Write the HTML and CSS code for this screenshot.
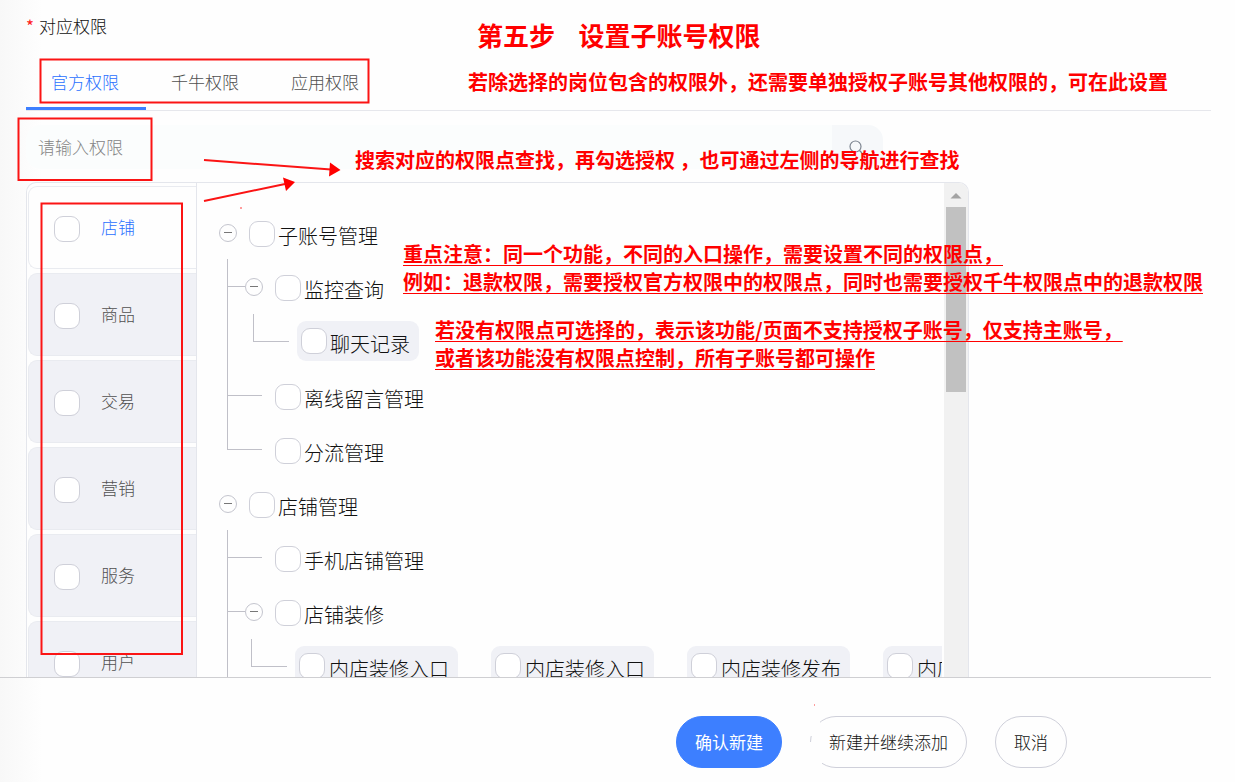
FILE: index.html
```
<!DOCTYPE html>
<html lang="zh-CN">
<head>
<meta charset="utf-8">
<meta name="viewport" content="width=device-width, initial-scale=1">
<title>设置子账号权限</title>
<link rel="stylesheet" href="styles.css">
</head>
<body>
<div class="page">
  <main class="form">
    <h2 class="field-label"><span class="required">*</span>对应权限</h2>
    <div class="tabs" role="tablist">
      <button class="tab tab-active" type="button" role="tab" aria-selected="true">官方权限</button>
      <button class="tab" type="button" role="tab" aria-selected="false">千牛权限</button>
      <button class="tab" type="button" role="tab" aria-selected="false">应用权限</button>
    </div>
    <form class="search">
      <input class="search-input" type="text" placeholder="请输入权限" aria-label="请输入权限">
      <button class="search-button" type="button" aria-label="搜索">
        <svg width="14" height="14" viewBox="0 0 14 14" fill="none" stroke="#7d8590" stroke-width="1.200"><circle cx="6.500" cy="6.500" r="5.500"/><path d="M10.500 10.500L13 13"/></svg>
      </button>
    </form>
    <section class="panel">
      <nav class="categories">
        <label class="category category-active"><input class="check" type="checkbox"><span class="category-name">店铺</span></label>
        <label class="category"><input class="check" type="checkbox"><span class="category-name">商品</span></label>
        <label class="category"><input class="check" type="checkbox"><span class="category-name">交易</span></label>
        <label class="category"><input class="check" type="checkbox"><span class="category-name">营销</span></label>
        <label class="category"><input class="check" type="checkbox"><span class="category-name">服务</span></label>
        <label class="category"><input class="check" type="checkbox"><span class="category-name">用户</span></label>
      </nav>
      <ul class="tree">
        <li>
          <div class="row"><button class="toggle" type="button" aria-label="收起"></button><label class="node"><input class="check" type="checkbox"><span class="node-name">子账号管理</span></label></div>
          <ul class="children">
            <li class="branch">
              <div class="row"><button class="toggle" type="button" aria-label="收起"></button><label class="node"><input class="check" type="checkbox"><span class="node-name">监控查询</span></label></div>
              <div class="leaves">
                <label class="node chip"><input class="check" type="checkbox"><span class="node-name">聊天记录</span></label>
              </div>
            </li>
            <li class="branch branch-end"><div class="row"><label class="node"><input class="check" type="checkbox"><span class="node-name">离线留言管理</span></label></div></li>
            <li class="branch branch-end"><div class="row"><label class="node"><input class="check" type="checkbox"><span class="node-name">分流管理</span></label></div></li>
          </ul>
        </li>
        <li>
          <div class="row"><button class="toggle" type="button" aria-label="收起"></button><label class="node"><input class="check" type="checkbox"><span class="node-name">店铺管理</span></label></div>
          <ul class="children">
            <li class="branch branch-end"><div class="row"><label class="node"><input class="check" type="checkbox"><span class="node-name">手机店铺管理</span></label></div></li>
            <li class="branch branch-open">
              <div class="row"><button class="toggle" type="button" aria-label="收起"></button><label class="node"><input class="check" type="checkbox"><span class="node-name">店铺装修</span></label></div>
              <div class="leaves leaves-grid">
                <label class="node chip"><input class="check" type="checkbox"><span class="node-name">内店装修入口</span></label>
                <label class="node chip"><input class="check" type="checkbox"><span class="node-name">内店装修入口</span></label>
                <label class="node chip"><input class="check" type="checkbox"><span class="node-name">内店装修发布</span></label>
                <label class="node chip"><input class="check" type="checkbox"><span class="node-name">内店装修发布</span></label>
              </div>
            </li>
          </ul>
        </li>
      </ul>
      <div class="scrollbar">
        <svg class="scroll-up" width="24" height="24" viewBox="0 0 24 24"><path d="M6.500 15.500L12 10L17.500 15.500Z" fill="#a3a3a3"/></svg>
        <div class="scroll-thumb"></div>
      </div>
    </section>
  </main>
  <footer class="actions">
    <button class="action action-primary" type="button">确认新建</button>
    <button class="action action-cut" type="button">新建并继续添加</button>
    <button class="action" type="button">取消</button>
  </footer>
</div>
<div class="notes">
  <svg class="marks" width="1235" height="782" viewBox="0 0 1235 782" fill="none" stroke="#fb1414" stroke-width="2">
    <rect x="40.500" y="59.500" width="328" height="43"/>
    <rect x="18.500" y="118.500" width="133" height="61.500"/>
    <rect x="41.500" y="203.500" width="140.500" height="450.500"/>
    <path d="M204 160L331 169.500M204 201L285 184"/>
    <path d="M330 162.500L340.500 170L329 176.500ZM283 177.500L295 182L286 191Z" fill="#f00" stroke="none"/>
    <path d="M814 705h1M240 208h2" stroke="#ff9c9c"/>
  </svg>
  <p class="note note-title">第五步    设置子账号权限</p>
  <p class="note note-intro">若除选择的岗位包含的权限外，还需要单独授权子账号其他权限的，可在此设置</p>
  <p class="note note-search">搜索对应的权限点查找，再勾选授权 ，也可通过左侧的导航进行查找</p>
  <p class="note note-entry">重点注意：同一个功能，不同的入口操作，需要设置不同的权限点，<br>例如：退款权限，需要授权官方权限中的权限点，同时也需要授权千牛权限点中的退款权限</p>
  <p class="note note-missing">若没有权限点可选择的，表示该功能/页面不支持授权子账号，仅支持主账号，<br>或者该功能没有权限点控制，所有子账号都可操作</p>
</div>
</body>
</html>
```
FILE: styles.css
```
* { box-sizing: border-box; }

body {
  margin: 0;
  font-family: "Noto Sans CJK SC", sans-serif;
  font-weight: 300;
  font-size: 17px;
  line-height: 24px;
  color: #111;
  background: #fefefe;
}

button, input { font: inherit; color: inherit; }
button { cursor: pointer; }
ul { list-style: none; margin: 0; padding: 0; }

.page {
  height: 100vh;
  display: flex;
  flex-direction: column;
  background: linear-gradient(to right, #f8f8f8, #fefefe 42px);
}

.form {
  flex: 1;
  min-height: 0;
  overflow: hidden;
  display: flex;
  flex-direction: column;
  margin-right: 24px;
  padding: 14px 0 0 26px;
  border-bottom: 1px solid #cfcfd2;
}

.field-label {
  display: flex;
  gap: 5px;
  margin: 0;
  font-size: 17px;
  font-weight: 300;
}
.required { color: #ff2020; font-weight: 400; }

/* Tabs */
.tabs {
  display: flex;
  flex: none;
  margin-top: 18px;
  border-bottom: 1px solid #e6e7ec;
}
.tab {
  height: 54px;
  padding: 0 27px 0 25px;
  border: 0;
  border-bottom: 3px solid transparent;
  background: none;
  color: #505050;
}
.tab-active { color: #2a70ff; border-bottom-color: #3d7fff; }

/* Search */
.search {
  display: flex;
  flex: none;
  width: 73%;
  max-width: 857px;
  height: 44px;
  margin: 14px 0 13px;
  border-radius: 15px;
  overflow: hidden;
  background: #fbfdfd;
}
.search-input {
  flex: 1;
  min-width: 0;
  border: 0;
  padding: 0 12px;
  background: none;
  outline: 0;
}
.search-input::placeholder { color: #858585; opacity: 1; }
.search-button {
  width: 51px;
  border: 0;
  padding: 0 4px 0 0;
  background: #f6f8fa;
}

/* Panel */
.panel {
  flex: 1;
  min-height: 0;
  display: flex;
  width: 80%;
  max-width: 943px;
  border: 1px solid #e4e6ec;
  border-bottom: 0;
  border-radius: 10px 10px 0 0;
  background: #fefefe;
  overflow: hidden;
}

.categories {
  flex: none;
  width: 170px;
  display: flex;
  flex-direction: column;
  gap: 4px;
  padding: 3px 0 0 1px;
  border-right: 1px solid #e4e6ec;
}
.category {
  flex: none;
  height: 83px;
  display: flex;
  align-items: center;
  gap: 21px;
  padding: 2px 0 0 25px;
  border: 1px solid #e9ebf0;
  border-right: 0;
  border-radius: 9px 0 0 9px;
  background: #f0f1f6;
  color: #505050;
}
.category-active { background: #fefefe; color: #2a70ff; }
.category-name { padding-bottom: 4px; }

.check {
  appearance: none;
  flex: none;
  width: 26px;
  height: 26px;
  margin: 0;
  border: 1px solid #cfd0d9;
  border-radius: 9px;
  background: #fff;
}

/* Tree */
.tree {
  flex: 1;
  min-width: 0;
  overflow: hidden;
  padding-top: 24px;
  margin-right: 2px;
  font-size: 20px;
}
.row {
  display: flex;
  align-items: center;
  gap: 12px;
  height: 54px;
  padding-left: 22px;
}
.node { display: flex; align-items: center; gap: 3px; }
.node-name { flex: none; padding-top: 4px; }
.toggle {
  flex: none;
  width: 18px;
  height: 18px;
  margin-bottom: 3px;
  padding: 0 4px;
  border: 1px solid #c4c5ce;
  border-radius: 50%;
  background: #fefefe;
}
.toggle::before { content: ""; display: block; height: 1px; background: #777; }

.children { margin-left: 30px; }
.children .row { padding-left: 18px; }
.branch { position: relative; }
.branch-end .row { padding-left: 48px; }
.branch::before, .branch::after, .leaves::before {
  content: "";
  position: absolute;
  left: 0;
  border-left: 1px solid #c0c0c8;
}
.branch::before { top: -2px; bottom: 0; }
.branch:last-child::before { bottom: auto; height: 28px; }
.branch-open:last-child::before { bottom: 0; height: auto; }
.branch::after { top: 25px; width: 18px; border-left: 0; border-top: 1px solid #c0c0c8; }
.branch-end::after { width: 35px; }

.leaves {
  position: relative;
  display: flex;
  align-items: center;
  gap: 33px;
  height: 55px;
  margin-left: 26px;
  padding: 0 0 3px 44px;
}
.leaves-grid { margin-left: 24px; }
.leaves::before {
  top: -1px;
  width: 35px;
  height: 27px;
  border-bottom: 1px solid #c0c0c8;
}
.chip {
  flex: none;
  height: 40px;
  padding: 0 9px 0 4px;
  border-radius: 9px;
  background: #f0f1f6;
}
.chip .node-name { padding-top: 6px; }
.leaves-grid .node { gap: 4px; }

/* Scrollbar */
.scrollbar { flex: none; width: 24px; background: #f1f1f1; }
.scroll-up { display: block; }
.scroll-thumb { height: 185px; margin: 0 2px; background: #c1c1c1; }

/* Footer */
.actions {
  display: flex;
  justify-content: flex-end;
  gap: 28px;
  padding: 38px 168px 14px 26px;
}
.action {
  position: relative;
  height: 52px;
  padding: 0 18px;
  border: 1px solid #cfd0da;
  border-radius: 26px;
  background: #fefefe;
}
.action-primary {
  background: #3d7fff;
  border-color: #3d7fff;
  color: #fff;
  font-weight: 400;
}
.action-cut::before, .action-cut::after {
  content: "";
  position: absolute;
  left: -1px;
  background: #fefefe;
}
.action-cut::before { top: -1px; width: 10px; height: 20px; }
.action-cut::after { bottom: -1px; width: 12px; height: 26px; }

/* Annotations over the page */
.notes { position: absolute; inset: 0; overflow: hidden; pointer-events: none; }
.marks { position: absolute; top: 0; left: 0; }
.note {
  position: absolute;
  margin: 0;
  font-size: 20px;
  font-weight: 700;
  line-height: 28px;
  white-space: pre;
  color: #f00;
}
.note-title { left: 477px; top: 19px; font-size: 26px; line-height: 32px; }
.note-intro { left: 468px; top: 68px; }
.note-search { left: 355px; top: 146px; }
.note-entry, .note-missing {
  text-decoration: underline #f00 1px;
  text-underline-offset: 3px;
}
.note-entry { left: 403px; top: 240px; }
.note-missing { left: 435px; top: 316px; }
```
